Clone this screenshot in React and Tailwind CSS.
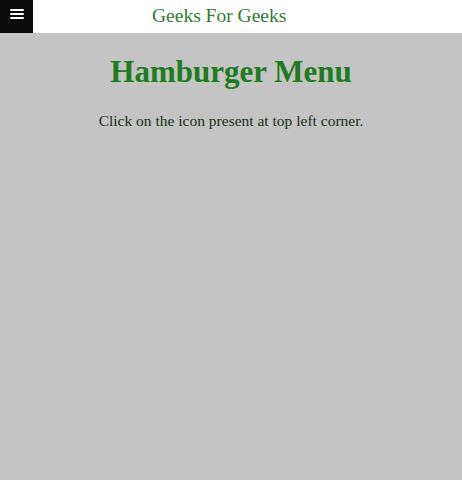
import React from "react";

export default function App() {
  return (
    <div className="min-h-[480px] bg-[#c4c4c4] font-['Liberation_Serif',serif]">
      <div className="flex h-[33px] items-center bg-white">
        <button className="flex h-[33px] w-[33px] flex-col items-center gap-[2px] bg-[#0b0b0b] pt-[9px]">
          <span className="h-[2px] w-[14px] rounded bg-white" />
          <span className="h-[2px] w-[14px] rounded bg-white" />
          <span className="h-[2px] w-[14px] rounded bg-white" />
        </button>
        <div className="pl-[119px] pb-[2px] text-[19.5px] leading-none text-[#2e7d32]">
          Geeks For Geeks
        </div>
      </div>
      <div className="text-center">
        <h1 className="pt-[23px] text-[31px] font-bold leading-none text-[#1e7b1e]">
          Hamburger Menu
        </h1>
        <p className="pt-[22px] text-[15.5px] text-[#163016]">
          Click on the icon present at top left corner.
        </p>
      </div>
    </div>
  );
}
